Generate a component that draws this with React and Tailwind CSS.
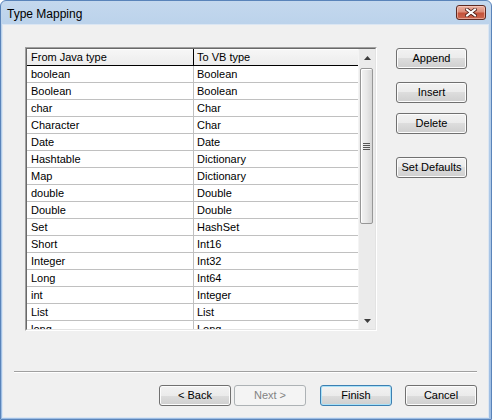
import React from "react";

const rows = [
  ["boolean", "Boolean"],
  ["Boolean", "Boolean"],
  ["char", "Char"],
  ["Character", "Char"],
  ["Date", "Date"],
  ["Hashtable", "Dictionary"],
  ["Map", "Dictionary"],
  ["double", "Double"],
  ["Double", "Double"],
  ["Set", "HashSet"],
  ["Short", "Int16"],
  ["Integer", "Int32"],
  ["Long", "Int64"],
  ["int", "Integer"],
  ["List", "List"],
  ["long", "Long"],
];

const btnBase =
  "h-[21px] flex items-center justify-center rounded-[3px] border text-[11px] leading-none select-none";
const btnNormal =
  "border-[#707070] bg-[linear-gradient(to_bottom,#f2f2f2_0%,#ebebeb_50%,#dddddd_50%,#cfcfcf_100%)] shadow-[inset_0_0_0_1px_#fcfcfc] text-black";
const btnDefault =
  "border-[#3c7fb1] bg-[linear-gradient(to_bottom,#f2f2f2_0%,#ebebeb_50%,#dddddd_50%,#cfcfcf_100%)] shadow-[inset_0_0_0_1px_#a9e1f8] text-black";
const btnDisabled = "border-[#adb2b5] bg-[#f4f4f4] text-[#838383]";

function Btn({ children, className = "", kind = "normal" }) {
  const k = kind === "default" ? btnDefault : kind === "disabled" ? btnDisabled : btnNormal;
  return <div className={`${btnBase} ${k} ${className}`}>{children}</div>;
}

function ArrowUp() {
  return (
    <svg width="7" height="4" viewBox="0 0 7 4">
      <path d="M3.5 0 L7 4 L0 4 Z" fill="#3d3d3d" />
    </svg>
  );
}
function ArrowDown() {
  return (
    <svg width="7" height="4" viewBox="0 0 7 4">
      <path d="M0 0 L7 0 L3.5 4 Z" fill="#3d3d3d" />
    </svg>
  );
}

export default function App() {
  return (
    <div className="w-[492px] h-[420px] flex flex-col border border-[#5a84ba] rounded-t-[6px] bg-[linear-gradient(to_bottom,#c4d8ee_0%,#b9d1ea_30px,#9dbde3_100%)] font-['Liberation_Sans',Arial,sans-serif] overflow-hidden">
      {/* Title bar */}
      <div className="h-[24px] flex items-start justify-between pl-[6px] pr-[5px] shrink-0">
        <div className="mt-[6px] text-[12px] leading-[14px] text-black">Type Mapping</div>
        <div className="mt-[4px] w-[30px] h-[15px] rounded-[3px] border border-[#5e2a22] bg-[linear-gradient(to_bottom,#eab0a2_0%,#dc8d79_45%,#c4523a_55%,#cb6750_100%)] shadow-[inset_0_0_0_1px_rgba(255,220,210,0.5)] flex items-center justify-center">
          <svg width="12" height="9" viewBox="0 0 12 9">
            <path d="M2 1.5 L10 7.5 M10 1.5 L2 7.5" stroke="#4a1c15" strokeWidth="3.6" strokeLinecap="square" />
            <path d="M2 1.5 L10 7.5 M10 1.5 L2 7.5" stroke="#ffffff" strokeWidth="2" strokeLinecap="square" />
          </svg>
        </div>
      </div>

      {/* Client area */}
      <div className="flex-1 ml-[2px] mr-[3px] mb-[2px] bg-[#f0f0f0] flex flex-col shadow-[0_0_0_1px_#dbe6f3]">
        <div className="flex pt-[22px] pl-[22px]">
          {/* Table */}
          <div className="w-[352px] h-[284px] border border-t-[#a0a0a0] border-l-[#a0a0a0] border-r-white border-b-white">
            <div className="h-full flex border border-t-[#696969] border-l-[#696969] border-r-[#e3e3e3] border-b-[#e3e3e3] bg-white">
              <div className="flex-1 overflow-hidden flex flex-col text-[11px] text-black">
                <div className="h-[17px] shrink-0 flex border-b border-black bg-[linear-gradient(to_bottom,#f7f7f7,#ececec)] shadow-[inset_0_1px_0_#ffffff]">
                  <div className="w-[167px] border-r border-black pl-[4px] flex items-center">From Java type</div>
                  <div className="flex-1 pl-[3px] flex items-center">To VB type</div>
                </div>
                {rows.map(([a, b], i) => (
                  <div key={i} className="h-[17px] shrink-0 flex border-b border-[#c0c0c0]">
                    <div className="w-[167px] border-r border-[#c0c0c0] pl-[4px] flex items-center">{a}</div>
                    <div className="flex-1 pl-[3px] flex items-center">{b}</div>
                  </div>
                ))}
              </div>
              {/* Scrollbar */}
              <div className="w-[17px] shrink-0 flex flex-col bg-[#ebebeb] border-l border-[#f4f4f4]">
                <div className="h-[17px] flex items-center justify-center">
                  <ArrowUp />
                </div>
                <div className="flex-1">
                  <div className="mt-[2px] ml-[1px] w-[13px] h-[156px] rounded-[2px] border border-[#979797] bg-[linear-gradient(to_right,#f3f3f3_0%,#e8e8e8_50%,#d6d6d6_100%)] shadow-[inset_1px_1px_0_#ffffff] flex items-center justify-center">
                    <div className="flex flex-col gap-[1px]">
                      <div className="w-[7px] h-[1px] bg-[#555555]" />
                      <div className="w-[7px] h-[1px] bg-[#555555]" />
                      <div className="w-[7px] h-[1px] bg-[#555555]" />
                      <div className="w-[7px] h-[1px] bg-[#555555]" />
                    </div>
                  </div>
                </div>
                <div className="h-[17px] flex items-center justify-center">
                  <ArrowDown />
                </div>
              </div>
            </div>
          </div>

          {/* Side buttons */}
          <div className="ml-[19px] pt-[1px] flex flex-col">
            <Btn className="w-[71px]">Append</Btn>
            <Btn className="w-[71px] mt-[13px]">Insert</Btn>
            <Btn className="w-[71px] mt-[10px]">Delete</Btn>
            <Btn className="w-[71px] mt-[23px]">Set Defaults</Btn>
          </div>
        </div>

        {/* Separator */}
        <div className="mt-[40px] ml-[11px] mr-[11px] h-[1px] bg-[#a0a0a0] shadow-[0_1px_0_#ffffff]" />

        {/* Bottom buttons */}
        <div className="mt-[13px] flex justify-end pr-[11px]">
          <Btn className="w-[72px]">&lt; Back</Btn>
          <Btn kind="disabled" className="w-[72px] ml-[3px]">Next &gt;</Btn>
          <Btn kind="default" className="w-[72px] ml-[14px]">Finish</Btn>
          <Btn className="w-[72px] ml-[13px]">Cancel</Btn>
        </div>
      </div>
    </div>
  );
}
